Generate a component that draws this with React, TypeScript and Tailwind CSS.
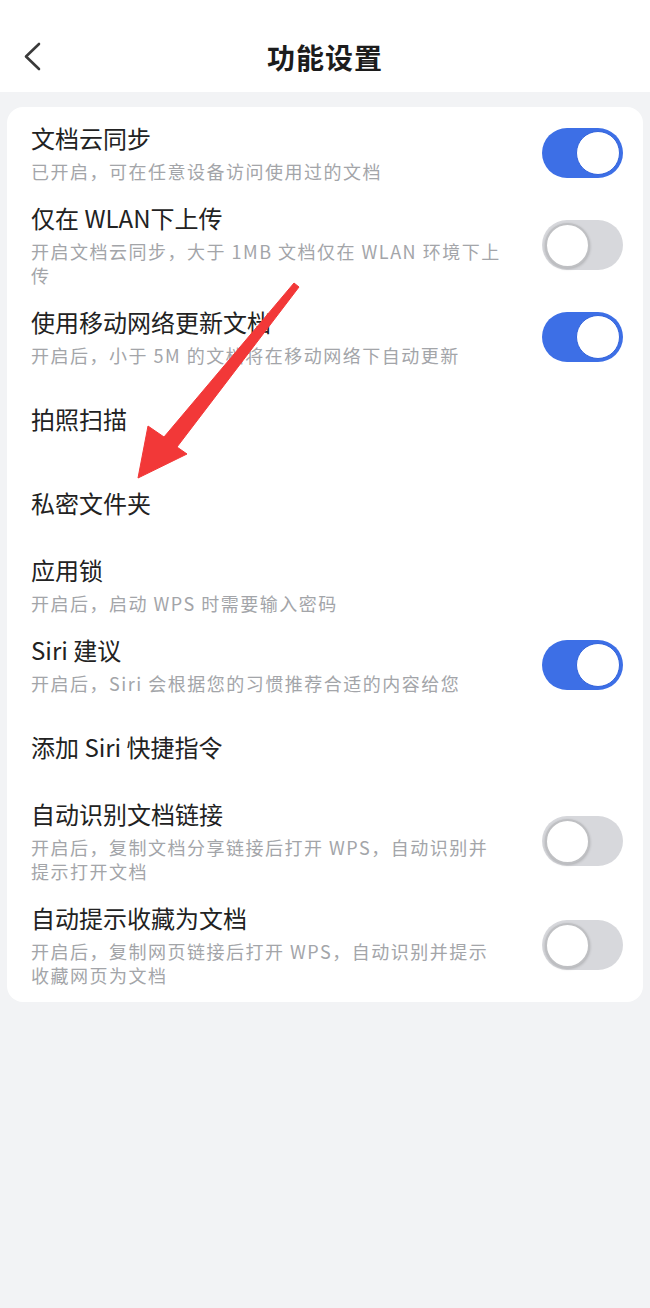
import React from 'react';

interface Row {
    title: string;
    desc?: string;
    toggle?: boolean;
}

const rows: Row[] = [
    { title: '文档云同步', desc: '已开启，可在任意设备访问使用过的文档', toggle: true },
    { title: '仅在 WLAN下上传', desc: '开启文档云同步，大于 1MB 文档仅在 WLAN 环境下上传', toggle: false },
    { title: '使用移动网络更新文档', desc: '开启后，小于 5M 的文档将在移动网络下自动更新', toggle: true },
    { title: '拍照扫描' },
    { title: '私密文件夹' },
    { title: '应用锁', desc: '开启后，启动 WPS 时需要输入密码' },
    { title: 'Siri 建议', desc: '开启后，Siri 会根据您的习惯推荐合适的内容给您', toggle: true },
    { title: '添加 Siri 快捷指令' },
    { title: '自动识别文档链接', desc: '开启后，复制文档分享链接后打开 WPS，自动识别并提示打开文档', toggle: false },
    { title: '自动提示收藏为文档', desc: '开启后，复制网页链接后打开 WPS，自动识别并提示收藏网页为文档', toggle: false },
];

const Toggle: React.FC<{ on: boolean }> = ({ on }) => (
    <div
        className={
            on
                ? 'w-[81px] h-[50px] rounded-full bg-[#3d6fe6] flex items-center justify-end px-[3px] shrink-0'
                : 'w-[81px] h-[50px] rounded-full bg-[#d7d8dc] flex items-center justify-start px-[3px] shrink-0'
        }
    >
        <div
            className={
                on
                    ? 'w-[44px] h-[44px] rounded-full bg-white border-[1.5px] border-[#3263db]'
                    : 'w-[45px] h-[45px] rounded-full bg-white border-2 border-[#bfc0c3] shadow-[0_1px_3px_rgba(0,0,0,0.2)]'
            }
        />
    </div>
);

const App: React.FC = () => {
    return (
        <div className="relative w-[650px] min-h-[1308px] bg-[#f2f3f5] font-['Noto_Sans_CJK_SC',sans-serif]">
            {/* Header */}
            <div className="h-[92px] bg-white grid grid-cols-[64px_1fr_64px] items-center pt-[22px]">
                <svg width="20" height="30" viewBox="0 0 20 30" className="ml-[23px]">
                    <polyline points="16,2 3,14.5 16,27" fill="none" stroke="#3a3a3a" strokeWidth="2.6" strokeLinecap="round" strokeLinejoin="round" />
                </svg>
                <div className="text-center text-[28px] font-semibold tracking-[1px] text-[#1c1c1c]">功能设置</div>
                <div />
            </div>

            {/* Settings card */}
            <div className="mt-[15px] mx-[7px] bg-white rounded-[16px] pt-[6px] pb-[5px] pl-[24px] pr-[20px]">
                {rows.map((row) =>
                    row.desc ? (
                        <div key={row.title} className="flex items-center justify-between py-[10px]">
                            <div className="w-[470px]">
                                <div className="text-[24px] leading-[30px] text-[#222]">{row.title}</div>
                                <div className="mt-[6px] text-[18px] leading-[24px] tracking-[1.5px] text-[#a3a5a9]">{row.desc}</div>
                            </div>
                            {row.toggle !== undefined && <Toggle on={row.toggle} />}
                        </div>
                    ) : (
                        <div key={row.title} className="h-[84px] flex items-center">
                            <div className="text-[24px] leading-[30px] text-[#222]">{row.title}</div>
                        </div>
                    )
                )}
            </div>

            {/* Annotation arrow */}
            <svg className="absolute left-0 top-0 pointer-events-none" width="650" height="1308" viewBox="0 0 650 1308">
                <polygon
                    points="294,283 299,287 177,447 187,454 138,478 148,426 164,437"
                    fill="#f23838"
                    stroke="#f23838"
                    strokeWidth="1"
                    strokeLinejoin="round"
                />
            </svg>
        </div>
    );
};

export default App;
